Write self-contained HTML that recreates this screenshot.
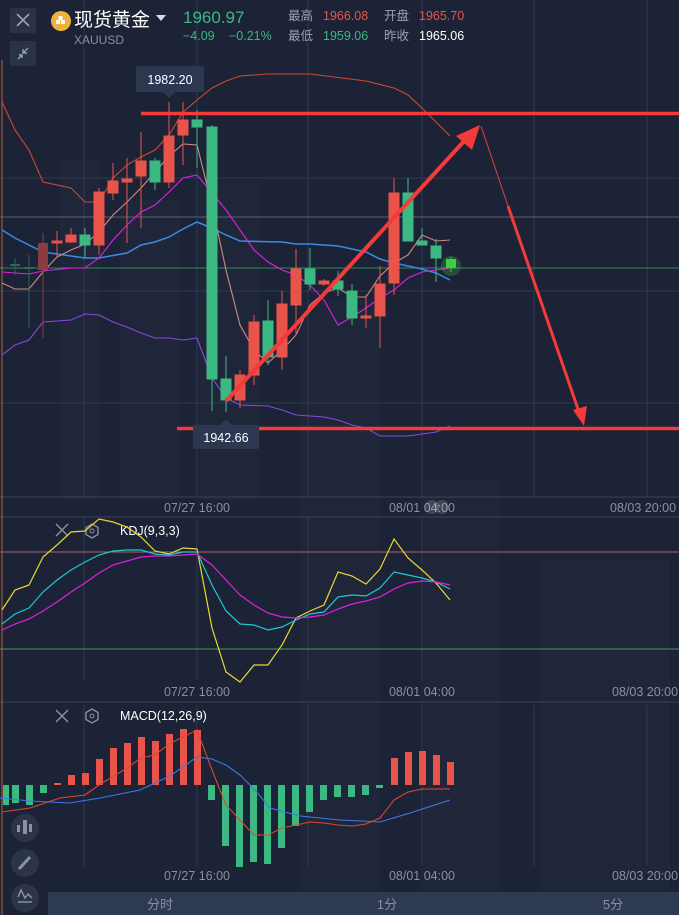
<!DOCTYPE html>
<html><head><meta charset="utf-8"><style>
html,body{margin:0;padding:0;background:#1c2336;width:679px;height:915px;overflow:hidden;font-family:"Liberation Sans","Noto Sans CJK SC",sans-serif}
svg{position:absolute;left:0;top:0}
</style></head><body>
<svg width="679" height="915" viewBox="0 0 679 915" xmlns="http://www.w3.org/2000/svg" font-family="Liberation Sans, Noto Sans CJK SC, sans-serif">
<rect width="679" height="915" fill="#1c2336"/>
<g fill="#1f2639">
<rect x="60" y="160" width="40" height="340"/><rect x="120" y="200" width="60" height="300"/><rect x="200" y="180" width="60" height="320"/><rect x="420" y="480" width="80" height="420"/><rect x="540" y="560" width="130" height="340"/><rect x="300" y="300" width="80" height="600"/>
</g>
<g stroke="#2f3850" stroke-width="1">
<line x1="84" y1="0" x2="84" y2="497"/><line x1="197" y1="0" x2="197" y2="497"/><line x1="308" y1="0" x2="308" y2="497"/><line x1="422" y1="0" x2="422" y2="497"/><line x1="534" y1="0" x2="534" y2="497"/><line x1="647" y1="0" x2="647" y2="497"/>
<line x1="0" y1="178" x2="679" y2="178"/><line x1="0" y1="291" x2="679" y2="291"/><line x1="0" y1="403" x2="679" y2="403"/>
<line x1="84" y1="518" x2="84" y2="680"/><line x1="197" y1="518" x2="197" y2="680"/><line x1="308" y1="518" x2="308" y2="680"/><line x1="422" y1="518" x2="422" y2="680"/>
<line x1="84" y1="705" x2="84" y2="866"/><line x1="197" y1="705" x2="197" y2="866"/><line x1="308" y1="705" x2="308" y2="866"/><line x1="422" y1="705" x2="422" y2="866"/><line x1="534" y1="705" x2="534" y2="866"/><line x1="647" y1="705" x2="647" y2="866"/>
</g>
<line x1="0" y1="217" x2="679" y2="217" stroke="#5a6278"/>
<line x1="0" y1="268" x2="679" y2="268" stroke="#2e8a5e"/>
<line x1="0" y1="497" x2="679" y2="497" stroke="#3a4258"/>
<line x1="0" y1="517" x2="679" y2="517" stroke="#3a4258"/>
<line x1="0" y1="702" x2="679" y2="702" stroke="#3a4258"/>
<line x1="0" y1="552" x2="679" y2="552" stroke="#b06070"/>
<line x1="0" y1="649" x2="679" y2="649" stroke="#4a9a50"/>
<line x1="2" y1="60" x2="2" y2="915" stroke="#c0622a"/>

<rect x="10" y="8" width="26" height="25" rx="2" fill="#2a3246"/>
<path d="M17 14 L29 26 M29 14 L17 26" stroke="#9aa0b0" stroke-width="1.6"/>
<rect x="10" y="41" width="26" height="25" rx="2" fill="#2a3246"/>
<path d="M28 48 L23 53 M23 49 V53 H27 M18 59 L22 55 M19 55 H22 V58" stroke="#9aa0b0" stroke-width="1.4" fill="none"/>
<circle cx="61" cy="21" r="10" fill="#f0b23c"/>
<rect x="56" y="20" width="4" height="4" fill="#fff"/><rect x="61" y="20" width="4" height="4" fill="#fff"/><rect x="58.5" y="16" width="4" height="4" fill="#fff"/>
<text x="74" y="26" fill="#fff" font-size="19">现货黄金</text>
<path d="M156 15 L166 15 L161 21 Z" fill="#ddd"/>
<text x="74" y="44" fill="#8a90a0" font-size="12">XAUUSD</text>
<text x="183" y="23" fill="#3cb882" font-size="17">1960.97</text>
<text x="183" y="40" fill="#3cb882" font-size="12.5">−4.09</text>
<text x="229" y="40" fill="#3cb882" font-size="12.5">−0.21%</text>
<g font-size="12.5">
<text x="288" y="20" fill="#9aa0b0">最高</text><text x="323" y="20" fill="#e8534a">1966.08</text>
<text x="384" y="20" fill="#9aa0b0">开盘</text><text x="419" y="20" fill="#e8534a">1965.70</text>
<text x="288" y="40" fill="#9aa0b0">最低</text><text x="323" y="40" fill="#3cb882">1959.06</text>
<text x="384" y="40" fill="#9aa0b0">昨收</text><text x="419" y="40" fill="#fff">1965.06</text>
</g>

<g fill="none" stroke-width="1.1">
<polyline stroke="#c84a30" points="2,102 15,130 29,150 43,182 71,188 85,202 99,202 113,178 127,165 141,157 155,150 169,135 183,112 197,100 212,88 226,81 240,76 268,74 310,74 366,81 394,88 408,95 422,108 436,122 450,136"/>
<polyline stroke="#8a48e0" points="2,355 15,345 29,340 43,322 71,320 85,314 99,315 113,322 127,327 141,333 155,338 169,338 183,340 197,338 212,378 226,398 240,405 268,406 282,410 296,415 324,417 338,420 352,425 366,428 380,436 408,436 436,432 450,426"/>
<polyline stroke="#3a8ae8" stroke-width="1.5" points="2,230 15,238 29,245 43,252 71,256 85,258 99,258 127,253 141,245 155,242 169,237 183,229 197,222 212,228 226,235 240,241 282,242 296,244 310,244 338,246 352,249 366,252 380,259 394,263 408,266 422,269 436,273 450,280"/>
<polyline stroke="#d08a80" points="2,283 15,289 29,289 43,272 57,257 71,250 85,244 99,232 113,215 127,202 141,188 155,172 169,156 183,144 197,145 212,205 226,270 240,325 254,350 268,363 282,350 296,335 310,305 324,293 338,288 352,297 366,297 380,276 394,263 408,255 422,235 436,241 450,240"/>
<polyline stroke="#e020e0" points="2,272 29,274 43,271 71,268 85,268 99,258 113,240 127,225 141,212 155,205 169,192 183,178 197,175 212,193 226,210 240,230 254,250 268,262 282,270 296,275 310,285 324,300 338,325 352,317 366,308 380,298 394,290 408,278 422,272 436,270 450,268"/>
</g>

<g stroke-width="1">
<g fill="#e8534a" stroke="#e8534a">
<line x1="43" y1="233" x2="43" y2="338" stroke="#8a3c40"/><rect x="38" y="243" width="10" height="27" fill="#8a3c40" stroke="none"/>
<line x1="57" y1="231" x2="57" y2="257"/><rect x="52" y="241" width="10" height="2"/>
<line x1="71" y1="228" x2="71" y2="243"/><rect x="66" y="235" width="10" height="7"/>
<line x1="99" y1="188" x2="99" y2="255"/><rect x="94" y="192" width="10" height="53"/>
<line x1="113" y1="163" x2="113" y2="200"/><rect x="108" y="181" width="10" height="12"/>
<line x1="127" y1="158" x2="127" y2="243"/><rect x="122" y="179" width="10" height="3"/>
<line x1="141" y1="132" x2="141" y2="228"/><rect x="136" y="161" width="10" height="15"/>
<line x1="169" y1="102" x2="169" y2="188"/><rect x="164" y="136" width="10" height="46"/>
<line x1="183" y1="102" x2="183" y2="165"/><rect x="178" y="120" width="10" height="15"/>
<line x1="240" y1="370" x2="240" y2="408"/><rect x="235" y="375" width="10" height="25"/>
<line x1="254" y1="315" x2="254" y2="385"/><rect x="249" y="322" width="10" height="53"/>
<line x1="282" y1="291" x2="282" y2="370"/><rect x="277" y="304" width="10" height="53"/>
<line x1="296" y1="249" x2="296" y2="335"/><rect x="291" y="269" width="10" height="36"/>
<line x1="324" y1="279" x2="324" y2="286"/><rect x="319" y="281" width="10" height="3"/>
<line x1="366" y1="295" x2="366" y2="328"/><rect x="361" y="316" width="10" height="2"/>
<line x1="380" y1="266" x2="380" y2="348"/><rect x="375" y="284" width="10" height="32"/>
<line x1="394" y1="178" x2="394" y2="295"/><rect x="389" y="193" width="10" height="90"/>
</g>
<g fill="#3cb882" stroke="#3cb882">
<line x1="15" y1="258" x2="15" y2="275" stroke="#2a6a58"/><rect x="10" y="264" width="10" height="2" fill="#2a6a58" stroke="none"/>
<line x1="29" y1="255" x2="29" y2="328" stroke="#2a6a58"/><rect x="24" y="267" width="10" height="2" fill="#2a6a58" stroke="none"/>
<line x1="85" y1="228" x2="85" y2="258"/><rect x="80" y="235" width="10" height="10"/>
<line x1="155" y1="158" x2="155" y2="190"/><rect x="150" y="161" width="10" height="21"/>
<line x1="197" y1="110" x2="197" y2="168"/><rect x="192" y="120" width="10" height="7"/>
<line x1="212" y1="125" x2="212" y2="411"/><rect x="207" y="127" width="10" height="252"/>
<line x1="226" y1="356" x2="226" y2="412"/><rect x="221" y="379" width="10" height="21"/>
<line x1="268" y1="300" x2="268" y2="365"/><rect x="263" y="321" width="10" height="36"/>
<line x1="310" y1="248" x2="310" y2="290"/><rect x="305" y="269" width="10" height="15"/>
<line x1="338" y1="271" x2="338" y2="296"/><rect x="333" y="281" width="10" height="8"/>
<line x1="352" y1="284" x2="352" y2="325"/><rect x="347" y="291" width="10" height="27"/>
<line x1="408" y1="178" x2="408" y2="241"/><rect x="403" y="193" width="10" height="48"/>
<line x1="422" y1="228" x2="422" y2="245"/><rect x="417" y="241" width="10" height="4"/>
<line x1="436" y1="239" x2="436" y2="282"/><rect x="431" y="246" width="10" height="12"/>
</g>
<circle cx="451" cy="266" r="10" fill="#3ad040" opacity="0.25"/>
<line x1="451" y1="257" x2="451" y2="272" stroke="#3ad040"/><rect x="446" y="259" width="10" height="9" fill="#3ad040"/>
</g>

<line x1="141" y1="113.5" x2="679" y2="113.5" stroke="#f53a3a" stroke-width="3.5"/>
<line x1="177" y1="428.5" x2="679" y2="428.5" stroke="#f53a3a" stroke-width="3.5"/>
<line x1="226" y1="401" x2="466" y2="139" stroke="#f53a3a" stroke-width="4"/>
<path d="M480 125 L472 150 L456 136 Z" fill="#f53a3a"/>
<path d="M481 126 L510 212" stroke="#e04040" stroke-width="1"/>
<path d="M508 206 L579 412" stroke="#f53a3a" stroke-width="3"/>
<path d="M584 426 L573 410 L587 406 Z" fill="#f53a3a"/>

<rect x="136" y="66" width="68" height="26" rx="2" fill="#2d3850"/>
<path d="M163 92 L169 98 L175 92 Z" fill="#2d3850"/>
<text x="170" y="84" fill="#fff" font-size="12.5" text-anchor="middle">1982.20</text>
<rect x="193" y="425" width="66" height="24" rx="2" fill="#2d3850"/>
<path d="M220 425 L226 419 L232 425 Z" fill="#2d3850"/>
<text x="226" y="442" fill="#fff" font-size="12.5" text-anchor="middle">1942.66</text>

<g fill="#8a90a0" font-size="12.5">
<text x="197" y="512" text-anchor="middle">07/27 16:00</text>
<text x="422" y="512" text-anchor="middle">08/01 04:00</text>
<text x="610" y="512">08/03 20:00</text>
<text x="197" y="696" text-anchor="middle">07/27 16:00</text>
<text x="422" y="696" text-anchor="middle">08/01 04:00</text>
<text x="612" y="696">08/03 20:00</text>
<text x="197" y="880" text-anchor="middle">07/27 16:00</text>
<text x="422" y="880" text-anchor="middle">08/01 04:00</text>
<text x="612" y="880">08/03 20:00</text>
</g>
<circle cx="432" cy="507" r="7" fill="#fff" opacity="0.15"/><circle cx="442" cy="507" r="7" fill="#fff" opacity="0.15"/>

<path d="M56 524 L68 536 M68 524 L56 536" stroke="#8a90a0" stroke-width="1.5"/>
<path d="M92 524 L98 527.5 L98 534.5 L92 538 L86 534.5 L86 527.5 Z" stroke="#8a90a0" stroke-width="1.4" fill="none"/><circle cx="92" cy="531" r="2" fill="none" stroke="#8a90a0"/>
<text x="120" y="535" fill="#fff" font-size="12.5">KDJ(9,3,3)</text>
<g fill="none" stroke-width="1.2">
<polyline stroke="#e8d830" points="2,610 15,590 29,585 43,557 57,545 71,532 85,531 99,519 113,522 127,527 141,537 155,551 169,554 183,548 197,549 212,628 226,672 240,682 254,665 268,665 282,645 296,618 310,611 324,605 338,572 352,576 366,584 380,569 394,539 408,558 422,570 436,583 450,600"/>
<polyline stroke="#20c8d0" points="2,624 15,614 29,608 43,592 57,580 71,570 85,562 99,555 113,551 127,550 141,550 155,554 169,555 183,552 197,552 212,585 226,611 240,624 254,625 268,630 282,627 296,620 310,614 324,612 338,597 352,595 366,596 380,588 394,572 408,575 422,578 436,582 450,589"/>
<polyline stroke="#e020e0" points="2,630 15,624 29,619 43,611 57,602 71,592 85,583 99,573 113,565 127,561 141,557 155,556 169,556 183,555 197,554 212,565 226,580 240,595 254,605 268,613 282,617 296,618 310,617 324,615 338,609 352,604 366,601 380,597 394,589 408,583 422,581 436,582 450,585"/>
</g>

<path d="M56 710 L68 722 M68 710 L56 722" stroke="#8a90a0" stroke-width="1.5"/>
<path d="M92 709 L98 712.5 L98 719.5 L92 723 L86 719.5 L86 712.5 Z" stroke="#8a90a0" stroke-width="1.4" fill="none"/><circle cx="92" cy="716" r="2" fill="none" stroke="#8a90a0"/>
<text x="120" y="720" fill="#fff" font-size="12.5">MACD(12,26,9)</text>
<g fill="#e8534a">
<rect x="54" y="783" width="7" height="2"/><rect x="68" y="775" width="7" height="10"/><rect x="82" y="773" width="7" height="12"/><rect x="96" y="759" width="7" height="26"/><rect x="110" y="748" width="7" height="37"/><rect x="124" y="743" width="7" height="42"/><rect x="138" y="737" width="7" height="48"/><rect x="152" y="741" width="7" height="44"/><rect x="166" y="734" width="7" height="51"/><rect x="180" y="729" width="7" height="56"/><rect x="194" y="730" width="7" height="55"/>
<rect x="391" y="758" width="7" height="27"/><rect x="405" y="752" width="7" height="33"/><rect x="419" y="751" width="7" height="34"/><rect x="433" y="755" width="7" height="30"/><rect x="447" y="762" width="7" height="23"/>
</g>
<g fill="#3cb882">
<rect x="3" y="785" width="6" height="20"/><rect x="12" y="785" width="7" height="18"/><rect x="26" y="785" width="7" height="20"/><rect x="40" y="785" width="7" height="8"/>
<rect x="208" y="785" width="7" height="15"/><rect x="222" y="785" width="7" height="61"/><rect x="236" y="785" width="7" height="82"/><rect x="250" y="785" width="7" height="77"/><rect x="264" y="785" width="7" height="79"/><rect x="278" y="785" width="7" height="63"/><rect x="292" y="785" width="7" height="41"/><rect x="306" y="785" width="7" height="27"/><rect x="320" y="785" width="7" height="15"/><rect x="334" y="785" width="7" height="12"/><rect x="348" y="785" width="7" height="12"/><rect x="362" y="785" width="7" height="10"/><rect x="376" y="785" width="7" height="3"/>
</g>
<g fill="none" stroke-width="1.1">
<polyline stroke="#d84a30" points="2,812 30,808 60,798 85,795 99,785 127,768 141,758 155,755 169,744 183,737 197,730 212,770 226,805 240,820 254,835 268,835 282,828 296,825 310,822 324,823 338,825 352,826 366,824 380,818 394,800 408,792 422,789 450,789"/>
<polyline stroke="#3a7ae8" points="0,798 30,801 70,803 100,798 140,790 170,776 197,757 212,759 226,765 240,775 255,790 270,808 300,816 340,820 380,822 410,813 450,800"/>
</g>

<circle cx="25" cy="828" r="14" fill="#2c3448"/>
<g fill="#8a90a0"><rect x="17" y="825" width="3" height="7"/><rect x="23" y="820" width="4" height="14"/><rect x="29" y="824" width="3" height="8"/></g>
<circle cx="25" cy="863" r="14" fill="#2c3448"/>
<path d="M19 869 L30 857" stroke="#8a90a0" stroke-width="3"/>
<circle cx="25" cy="898" r="14" fill="#2c3448"/>
<path d="M18 897 L21 890 L25 898 L28 894 L32 898 M18 902 H32" stroke="#8a90a0" stroke-width="1.5" fill="none"/>

<rect x="48" y="892" width="631" height="23" fill="#2e3a52"/>
<g fill="#8a90a0" font-size="13" text-anchor="middle">
<text x="160" y="909">分时</text><text x="387" y="909">1分</text><text x="613" y="909">5分</text>
</g>
</svg>
</body></html>
